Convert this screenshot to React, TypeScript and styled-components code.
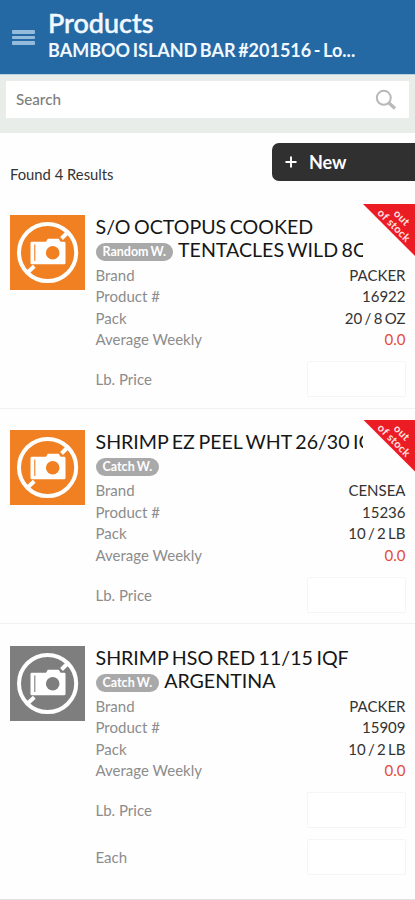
import React from "react";
import styled, { createGlobalStyle } from "styled-components";

const GlobalStyle = createGlobalStyle`
  * { box-sizing: border-box; }
  html, body { margin: 0; padding: 0; background: #fff; }
  body { font-family: Lato, "Open Sans", sans-serif; color: #333; }
`;

const Screen = styled.main`
  width: 415px;
  height: 900px;
  overflow: hidden;
  background: #fefefe;
`;

const Header = styled.header`
  display: flex;
  height: 74px;
  padding: 8px 12px 0;
  background: #2469a4;
  color: #f1f8ff;
`;

const MenuButton = styled.button`
  display: flex;
  flex-direction: column;
  gap: 2px;
  width: 23px;
  height: 15px;
  margin: 22px 13px 0 0;
  padding: 0;
  border: 0;
  background: none;
`;

const MenuBar = styled.span`
  height: 3.6px;
  border-radius: 1px;
  background: #94bbdc;
`;

const Heading = styled.h1`
  margin: 0;
  font-size: 27px;
  line-height: 30px;
  font-weight: 500;
  white-space: nowrap;
  -webkit-text-stroke: 0.5px currentColor;
`;

const Customer = styled.div`
  font-size: 18px;
  line-height: 25px;
  font-weight: 700;
  word-spacing: -1.8px;
  white-space: nowrap;
`;

const SearchBar = styled.div`
  height: 59px;
  padding: 6px 6px 0;
  border-top: 1px solid #bcd0dd;
  background: #e9edea;
`;

const SearchBox = styled.label`
  display: flex;
  align-items: center;
  justify-content: space-between;
  height: 37px;
  padding: 0 12px 0 10px;
  background: #fff;
`;

const SearchInput = styled.input`
  width: 200px;
  padding: 0 0 2px;
  border: 0;
  outline: 0;
  background: none;
  font: 500 15.2px/20px Lato, sans-serif;
  &::placeholder { color: #7d7d7d; opacity: 1; }
`;

const Toolbar = styled.div`
  display: flex;
  justify-content: space-between;
  height: 60px;
  padding: 10px 0 0 10px;
`;

const ResultCount = styled.div`
  padding-top: 21px;
  font-size: 14.8px;
  line-height: 20px;
`;

const NewButton = styled.button`
  display: flex;
  align-items: center;
  gap: 12px;
  width: 143px;
  height: 38px;
  padding: 0 0 0 13px;
  border: 0;
  border-radius: 7px 0 0 7px;
  background: #303030;
  color: #fff;
  font: 700 18px/24px Lato, sans-serif;
`;

const Item = styled.article<{ $height: number }>`
  position: relative;
  display: flex;
  gap: 10.5px;
  height: ${(p) => p.$height}px;
  padding: 21.5px 9.5px 0 10px;
  border-bottom: 1px solid #f1f1f1;
  &:last-child { border-bottom-color: #e2e2e2; }
`;

const Thumb = styled.svg<{ $available: boolean }>`
  flex: none;
  width: 75px;
  height: 75px;
  background: ${(p) => (p.$available ? "#7e7e7e" : "#f08021")};
  color: ${(p) => (p.$available ? "#7e7e7e" : "#f08021")};
`;

const Details = styled.div`
  flex: 1;
  min-width: 0;
`;

const Title = styled.h2`
  height: 50px;
  width: 267.5px;
  margin: 0;
  overflow: hidden;
  font-size: 19.6px;
  line-height: 23px;
  font-weight: 400;
  word-spacing: -1.5px;
  color: #161616;
  white-space: nowrap;
`;

const TitleLine = styled.div`
  display: flex;
  align-items: center;
  height: 23px;
`;

const Pill = styled.span`
  height: 18px;
  margin: 5px 5px 0 0;
  padding: 0 7px;
  border-radius: 9px;
  background: #a9a9a9;
  color: #fff;
  font-size: 12.5px;
  line-height: 18px;
  font-weight: 700;
  word-spacing: -1px;
`;

const Spec = styled.div`
  display: flex;
  justify-content: space-between;
  font-size: 15px;
  line-height: 21.5px;
`;

const Label = styled.span`
  color: #8c8c8c;
`;

const Value = styled.span<{ $alert?: boolean }>`
  word-spacing: -1.5px;
  color: ${(p) => (p.$alert ? "#e44a3b" : "#333")};
`;

const Field = styled.label`
  display: flex;
  justify-content: space-between;
  align-items: center;
  height: 36px;
  margin-top: 10.5px;
  font-size: 15px;
`;

const Quantity = styled.input`
  width: 99px;
  height: 36px;
  border: 1px solid #f5f5f5;
  border-radius: 2px;
  outline: 0;
  background: #fff;
`;

const Ribbon = styled.div`
  position: absolute;
  top: 11px;
  right: 0;
  width: 52px;
  height: 52px;
  display: grid;
  place-items: center;
  background: #ec1c24;
  clip-path: polygon(0 0, 100% 0, 100% 100%);
`;

const RibbonText = styled.span`
  font-size: 10.8px;
  line-height: 10.5px;
  font-weight: 700;
  letter-spacing: 0.4px;
  color: #ffe3e3;
  text-align: center;
  white-space: nowrap;
  transform: translate(9.5px, -9px) rotate(45deg);
`;

type Product = {
  title: string;
  rest: string;
  weight: string;
  brand: string;
  number: string;
  pack: string;
  fields: string[];
  available: boolean;
  height: number;
};

const products: Product[] = [
  { title: "S/O OCTOPUS COOKED", rest: "TENTACLES WILD 8OZ", weight: "Random W.", brand: "PACKER", number: "16922", pack: "20 / 8 OZ", fields: ["Lb. Price"], available: false, height: 215.5 },
  { title: "SHRIMP EZ PEEL WHT 26/30 IQF", rest: "", weight: "Catch W.", brand: "CENSEA", number: "15236", pack: "10 / 2 LB", fields: ["Lb. Price"], available: false, height: 215.5 },
  { title: "SHRIMP HSO RED 11/15 IQF", rest: "ARGENTINA", weight: "Catch W.", brand: "PACKER", number: "15909", pack: "10 / 2 LB", fields: ["Lb. Price", "Each"], available: true, height: 276 },
];

const NoPhoto = ({ available }: { available: boolean }) => (
  <Thumb viewBox="0 0 75 75" $available={available}>
    <circle cx="37.6" cy="37.5" r="28.6" fill="none" stroke="#fff" strokeWidth="4" />
    <path d="M17 58 L24.300 51.200 M51.500 23.500 L58 17" stroke="#fff" strokeWidth="4" />
    <path d="M20.500 28q0-1.300 1.300-1.300h14.200l1.800-3h11l1.800 3h3.600q1.300 0 1.300 1.300V48q0 1.300-1.300 1.300H21.800q-1.300 0-1.300-1.300z" fill="#fff" />
    <path d="M24.800 29.500v16.500" stroke="currentColor" strokeWidth="1.100" />
    <circle cx="42.700" cy="37.800" r="6.800" fill="currentColor" />
  </Thumb>
);

const ProductItem = ({ product: p }: { product: Product }) => (
  <Item $height={p.height}>
    <NoPhoto available={p.available} />
    <Details>
      <Title>
        <TitleLine>{p.title}</TitleLine>
        <TitleLine><Pill>{p.weight}</Pill>{p.rest}</TitleLine>
      </Title>
      <Spec><Label>Brand</Label><Value>{p.brand}</Value></Spec>
      <Spec><Label>Product #</Label><Value>{p.number}</Value></Spec>
      <Spec><Label>Pack</Label><Value>{p.pack}</Value></Spec>
      <Spec><Label>Average Weekly</Label><Value $alert>0.0</Value></Spec>
      {p.fields.map((f) => (
        <Field key={f}><Label>{f}</Label><Quantity /></Field>
      ))}
    </Details>
    {!p.available && <Ribbon><RibbonText>out<br />of stock</RibbonText></Ribbon>}
  </Item>
);

export default function App() {
  return (
    <>
      <GlobalStyle />
      <Screen>
        <Header>
          <MenuButton aria-label="Menu"><MenuBar /><MenuBar /><MenuBar /></MenuButton>
          <div>
            <Heading>Products</Heading>
            <Customer>BAMBOO ISLAND BAR #201516 - Lo...</Customer>
          </div>
        </Header>
        <SearchBar>
          <SearchBox>
            <SearchInput placeholder="Search" />
            <svg width="22" height="22" viewBox="0 0 22 22" fill="none" stroke="#b9b9b9">
              <circle cx="8.800" cy="8.800" r="7" strokeWidth="2" />
              <path d="M14 14l6 5.500" strokeWidth="3.200" />
            </svg>
          </SearchBox>
        </SearchBar>
        <Toolbar>
          <ResultCount>Found 4 Results</ResultCount>
          <NewButton>
            <svg width="12" height="12" viewBox="0 0 12 12" stroke="#fff" strokeWidth="1.900"><path d="M6 .5v11M.5 6h11" /></svg>
            New
          </NewButton>
        </Toolbar>
        {products.map((p) => <ProductItem key={p.number} product={p} />)}
      </Screen>
    </>
  );
}
